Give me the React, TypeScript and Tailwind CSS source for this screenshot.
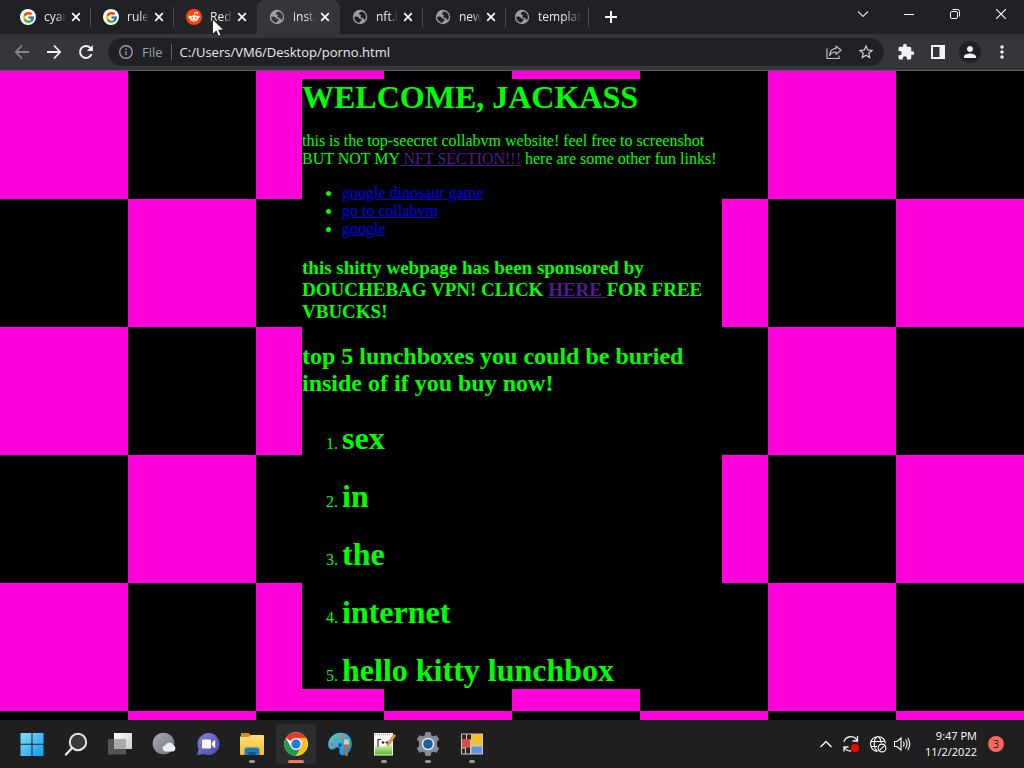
import React from "react";
import { FcGoogle } from "react-icons/fc";
import { MdExtension, MdPerson, MdMoreVert, MdStarOutline } from "react-icons/md";

type TabInfo = { title: string; icon: "google" | "reddit" | "globe"; active?: boolean; hover?: boolean; divider?: boolean };

const tabs: TabInfo[] = [
  { title: "cyan", icon: "google", divider: true },
  { title: "rule3", icon: "google", divider: true },
  { title: "Redd", icon: "reddit", hover: true },
  { title: "insta", icon: "globe", active: true },
  { title: "nft.h", icon: "globe", divider: true },
  { title: "new", icon: "globe", divider: true },
];

function GoogleIcon() {
  return (
    <span className="flex size-4 shrink-0 items-center justify-center rounded-full bg-white">
      <FcGoogle size={13} />
    </span>
  );
}

function RedditIcon() {
  return (
    <svg viewBox="0 0 16 16" className="size-4 shrink-0" aria-hidden="true">
      <circle cx="8" cy="8" r="8" fill="#ff4500" />
      <ellipse cx="8" cy="9.3" rx="4.3" ry="3.1" fill="#fff" />
      <circle cx="3.6" cy="7.8" r="1.2" fill="#fff" />
      <circle cx="12.4" cy="7.8" r="1.2" fill="#fff" />
      <path d="M8 6.4l.7-3 2.3.5" fill="none" stroke="#fff" strokeWidth=".7" />
      <circle cx="11.3" cy="4" r=".9" fill="#fff" />
      <circle cx="6.3" cy="8.6" r=".85" fill="#ff4500" />
      <circle cx="9.7" cy="8.6" r=".85" fill="#ff4500" />
      <path d="M6.2 10.7q1.8 1.1 3.6 0" fill="none" stroke="#ff4500" strokeWidth=".6" />
    </svg>
  );
}

function GlobeIcon({ land }: { land: string }) {
  return (
    <svg viewBox="0 0 16 16" className="size-4 shrink-0" aria-hidden="true">
      <circle cx="8" cy="8" r="7.2" fill="#9aa0a6" />
      <path
        d="M9.400 2.600C8 3 6.800 3.800 7 5c.2 1 1.600.7 1.900 1.500.3.800-.9 1.200-.3 2 .6.700 2.200.1 2.900.9.500.6.100 1.300 1 1.300 1 0 1.400-1.500 1.400-2.700C13.900 5.200 12 3.100 9.400 2.600z"
        className={land}
      />
      <path
        d="M2.200 7.400C2.100 10.800 4.600 13.500 7.600 13.700c.5-.5.300-1.200.9-1.700.6-.500 1.500-.7 1.300-1.500-.3-.9-1.700-.6-2.400-1.100-.7-.5-.8-1.500-1.900-1.700-1-.2-2.200.1-3.300-.3z"
        className={land}
      />
    </svg>
  );
}

function Favicon({ kind, active }: { kind: TabInfo["icon"]; active?: boolean }) {
  if (kind === "google") return <GoogleIcon />;
  if (kind === "reddit") return <RedditIcon />;
  return <GlobeIcon land={active ? "fill-[#35363a]" : "fill-[#202124]"} />;
}

const fade = "overflow-hidden whitespace-nowrap [mask-image:linear-gradient(to_right,black_60%,transparent)]";

function Tab({ tab }: { tab: TabInfo }) {
  const bg = tab.active ? "bg-[#35363a]" : tab.hover ? "bg-[#232428]" : "";
  return (
    <div className={`relative flex w-[83px] items-center rounded-t-lg pl-3 ${bg}`}>
      <button type="button" className="flex items-center gap-2">
        <Favicon kind={tab.icon} active={tab.active} />
        <span className={`w-[22px] text-left ${fade}`}>{tab.title}</span>
      </button>
      <button type="button" aria-label={`Close ${tab.title}`} className="ml-[5px]">
        <svg viewBox="0 0 10 10" className="size-[10px]" aria-hidden="true">
          <path d="M1.2 1.2l7.6 7.6M8.8 1.2L1.2 8.8" stroke="#fff" strokeWidth="1.7" />
        </svg>
      </button>
      {tab.divider && <span className="absolute right-0 h-5 w-px bg-[#4a4c50]" />}
    </div>
  );
}

function TabStrip() {
  return (
    <header className="flex h-[34px] bg-[#202124] pl-2 text-xs text-[#e8eaed]">
      <nav className="flex" aria-label="Tabs">
        {tabs.map((tab, i) => (
          <Tab key={i} tab={tab} />
        ))}
        <button type="button" className="relative flex w-[83px] items-center gap-2 pl-2">
          <Favicon kind="globe" />
          <span className={`w-11 text-left ${fade}`}>template</span>
          <span className="absolute right-0 h-5 w-px bg-[#4a4c50]" />
        </button>
      </nav>
      <button type="button" aria-label="New tab" className="flex w-11 items-center justify-center">
        <svg viewBox="0 0 12 12" className="size-3" aria-hidden="true">
          <path d="M6 0v12M0 6h12" stroke="#fff" strokeWidth="2" />
        </svg>
      </button>
      <div className="ml-auto flex h-7">
        <button type="button" aria-label="Search tabs" className="flex w-[46px] items-center justify-center">
          <svg viewBox="0 0 12 8" className="h-2 w-3" fill="none" stroke="#ddd" strokeWidth="1.1" aria-hidden="true">
            <path d="M1 1.5l5 5 5-5" />
          </svg>
        </button>
        <button type="button" aria-label="Minimize" className="flex w-[46px] items-center justify-center">
          <svg viewBox="0 0 10 10" className="size-[10px]" aria-hidden="true">
            <path d="M0 5.5h10" stroke="#fff" />
          </svg>
        </button>
        <button type="button" aria-label="Restore" className="flex w-[46px] items-center justify-center">
          <svg viewBox="0 0 10 10" className="size-[10px]" fill="none" stroke="#fff" aria-hidden="true">
            <rect x=".5" y="2.5" width="7" height="7" rx="1.3" />
            <path d="M2.5.5h5a2 2 0 0 1 2 2v5" />
          </svg>
        </button>
        <button type="button" aria-label="Close window" className="flex w-[46px] items-center justify-center">
          <svg viewBox="0 0 10 10" className="size-[10px]" aria-hidden="true">
            <path d="M0 0l10 10M10 0L0 10" stroke="#fff" strokeWidth="1.1" />
          </svg>
        </button>
      </div>
    </header>
  );
}

function ToolButton({ label, children }: { label: string; children: React.ReactNode }) {
  return (
    <button type="button" aria-label={label} className="flex h-7 w-8 shrink-0 items-center justify-center text-[#f1f3f4]">
      {children}
    </button>
  );
}

function Toolbar() {
  return (
    <div className="flex h-[37px] items-center border-b border-[#5b5c5f] bg-[#35363a] px-[6px]">
      <ToolButton label="Back">
        <svg viewBox="0 0 16 16" className="size-4" fill="none" stroke="#85878a" strokeWidth="1.8" aria-hidden="true">
          <path d="M15 8H2M8 1.5L1.8 8 8 14.5" />
        </svg>
      </ToolButton>
      <ToolButton label="Forward">
        <svg viewBox="0 0 16 16" className="size-4" fill="none" stroke="currentColor" strokeWidth="1.8" aria-hidden="true">
          <path d="M1 8h13M8 1.5L14.2 8 8 14.5" />
        </svg>
      </ToolButton>
      <ToolButton label="Reload">
        <svg viewBox="0 0 16 16" className="size-4" fill="none" stroke="currentColor" strokeWidth="1.9" aria-hidden="true">
          <path d="M13.6 10.2A6 6 0 1 1 12.4 3.8L14 5.4" />
          <path d="M14.9 1v6H8.9z" fill="currentColor" stroke="none" />
        </svg>
      </ToolButton>
      <form className="mx-[6px] flex h-7 flex-1 items-center rounded-full bg-[#202124] pl-[10px] text-sm" onSubmit={(e) => e.preventDefault()}>
        <svg viewBox="0 0 16 16" className="size-4 shrink-0" fill="none" stroke="#9aa0a6" strokeWidth="1.4" aria-hidden="true">
          <circle cx="8" cy="8" r="6.3" />
          <path d="M8 7.2v4M8 4.4v1.5" />
        </svg>
        <label htmlFor="address" className="ml-2 text-[13px] text-[#9aa0a6]">
          File
        </label>
        <span className="ml-2 h-4 w-px bg-[#5f6368]" />
        <input
          id="address"
          type="text"
          defaultValue="C:/Users/VM6/Desktop/porno.html"
          className="ml-2 min-w-0 flex-1 bg-transparent text-[13px] text-[#e8eaed] outline-none"
        />
        <ToolButton label="Share">
          <svg viewBox="0 0 16 16" className="size-4" fill="none" stroke="#bdc1c6" strokeWidth="1.2" aria-hidden="true">
            <path d="M1 4.5v10h12v-3" />
            <path d="M10 2l5 4.2-5 4.2V8C7 8 5 9 3.6 11.4 4 7.4 6.4 4.7 10 4.4z" strokeLinejoin="round" />
          </svg>
        </ToolButton>
        <ToolButton label="Bookmark">
          <MdStarOutline size={18} className="text-[#d0d3d6]" />
        </ToolButton>
        <span className="w-[2px]" />
      </form>
      <ToolButton label="Extensions">
        <MdExtension size={18} />
      </ToolButton>
      <ToolButton label="Side panel">
        <svg viewBox="0 0 14 14" className="size-[14px]" aria-hidden="true">
          <path d="M0 0h14v14H0zM2 2v10h6.500V2z" fill="currentColor" fillRule="evenodd" />
        </svg>
      </ToolButton>
      <ToolButton label="Profile">
        <span className="flex size-[22px] items-center justify-center rounded-full bg-[#202124]">
          <MdPerson size={18} />
        </span>
      </ToolButton>
      <ToolButton label="Menu">
        <MdMoreVert size={20} />
      </ToolButton>
    </div>
  );
}

function PageLink({ visited, children }: { visited?: boolean; children: React.ReactNode }) {
  return (
    <a href="#" className={`underline ${visited ? "text-[#551a8b]" : "text-[#0000ee]"}`}>
      {children}
    </a>
  );
}

function WebPage() {
  return (
    <main className="flex-1 overflow-hidden bg-[conic-gradient(#000_25%,#ff00dc_0_50%,#000_0_75%,#ff00dc_0)] bg-[length:256px_256px] pt-2 font-['Liberation_Serif',serif] text-base leading-[18px] text-[#00ff00]">
      <article className="mx-auto max-w-[420px] bg-black">
        <h1 className="text-[32px] leading-[37px] font-bold">WELCOME, JACKASS</h1>
        <p className="mt-4">
          this is the top-seecret collabvm website! feel free to screenshot BUT NOT MY
          <PageLink visited> NFT SECTION!!!</PageLink> here are some other fun links!
        </p>
        <ul className="mt-4 list-disc pl-10">
          <li><PageLink>google dinosaur game</PageLink></li>
          <li><PageLink>go to collabvm</PageLink></li>
          <li><PageLink>google</PageLink></li>
        </ul>
        <h3 className="mt-[19px] text-[19px] leading-[22px] font-bold">
          this shitty webpage has been sponsored by DOUCHEBAG VPN! CLICK <PageLink visited>HERE </PageLink>FOR FREE VBUCKS!
        </h3>
        <h2 className="mt-5 text-2xl leading-[27px] font-bold">
          top 5 lunchboxes you could be buried inside of if you buy now!
        </h2>
        <ol className="mt-[23px] flex list-decimal flex-col gap-[21px] pl-10">
          {["sex", "in", "the", "internet", "hello kitty lunchbox"].map((item) => (
            <li key={item}>
              <h1 className="text-[32px] leading-[37px] font-bold">{item}</h1>
            </li>
          ))}
        </ol>
      </article>
    </main>
  );
}

function TaskIcon({ label, running, active, children }: { label: string; running?: boolean; active?: boolean; children: React.ReactNode }) {
  return (
    <button
      type="button"
      aria-label={label}
      className={`relative mx-[2px] flex h-10 w-10 items-center justify-center rounded ${active ? "bg-[#2d2d2d]" : ""}`}
    >
      <svg viewBox="0 0 24 24" className="size-6" aria-hidden="true">
        {children}
      </svg>
      {running && (
        <span className={`absolute bottom-px h-[3px] rounded-full ${active ? "w-4 bg-[#f0776c]" : "w-[6px] bg-[#9a9a9a]"}`} />
      )}
    </button>
  );
}

function Taskbar() {
  return (
    <footer className="flex h-12 items-center bg-[#1f1f1f] pr-5 pl-[10px] text-xs text-white">
      <svg className="absolute size-0" aria-hidden="true">
        <defs>
          <linearGradient id="win" x1="0" y1="0" x2="1" y2="1"><stop stopColor="#83dcfb" /><stop offset="1" stopColor="#0fa0ee" /></linearGradient>
          <linearGradient id="chat" x1="0" y1="0" x2="1" y2="1"><stop stopColor="#8a83dc" /><stop offset="1" stopColor="#4547ae" /></linearGradient>
          <linearGradient id="moon" x1="0" y1="0" x2="1" y2="1"><stop stopColor="#a9adb6" /><stop offset="1" stopColor="#6d727b" /></linearGradient>
          <linearGradient id="folder" x1="0" y1="0" x2="0" y2="1"><stop stopColor="#ffe07a" /><stop offset="1" stopColor="#f7b92c" /></linearGradient>
          <linearGradient id="paint" x1="0" y1="0" x2="1" y2="1"><stop stopColor="#58d2ee" /><stop offset="1" stopColor="#1580cd" /></linearGradient>
          <linearGradient id="view" x1="0" y1="0" x2="1" y2="1"><stop stopColor="#fff" /><stop offset="1" stopColor="#ccc" /></linearGradient>
          <linearGradient id="note" x1="0" y1="0" x2="0" y2="1"><stop stopColor="#e4f6b8" /><stop offset="1" stopColor="#55bd24" /></linearGradient>
        </defs>
      </svg>
      <TaskIcon label="Start">
        <path d="M.5 1H11.500V11.700H.5zM12.500 1H23.500V11.700H12.500zM.5 12.700H11.500V24H.5zM12.500 12.700H23.500V24H12.500z" fill="url(#win)" />
      </TaskIcon>
      <TaskIcon label="Search">
        <path d="M8.500 15.500L2 22.500" stroke="#e5e5e5" strokeWidth="2.400" strokeLinecap="round" />
        <circle cx="14" cy="10" r="8.200" fill="#3a3a3a" stroke="#e5e5e5" strokeWidth="2" />
      </TaskIcon>
      <TaskIcon label="Task view">
        <path d="M6 1H24V17H6z" fill="url(#view)" />
        <path d="M0 7H18V22.500H0z" fill="#555" />
        <path d="M6 7H18V17H6z" fill="#aaa" />
      </TaskIcon>
      <TaskIcon label="Weather">
        <circle cx="11.500" cy="11.500" r="10.800" fill="url(#moon)" />
        <path d="M13.500 19.500a3.200 3.200 0 0 1-.3-6.300 4.400 4.400 0 0 1 8-.2 3.400 3.400 0 0 1-.4 6.500z" fill="#e9edf5" />
      </TaskIcon>
      <TaskIcon label="Chat">
        <path d="M12.500 1a11 11 0 1 1-4.800 20.900L1.200 23.200 2.700 17A11 11 0 0 1 12.500 1z" fill="url(#chat)" />
        <rect x="6" y="7.500" width="9" height="9" rx="1.300" fill="#fff" />
        <path d="M16 10.600l3.200-2.800v8.400L16 13.400z" fill="#fff" />
      </TaskIcon>
      <TaskIcon label="File Explorer" running>
        <path d="M1 1h8l2.500 3.500H1z" fill="#d8920c" />
        <path d="M0 4.500h9l2.500-1.500H23a1 1 0 0 1 1 1V22a1 1 0 0 1-1 1H1a1 1 0 0 1-1-1z" fill="url(#folder)" />
        <path d="M4.500 23v-5a2.500 2.500 0 0 1 2.500-2.500h10a2.500 2.500 0 0 1 2.500 2.500v5z" fill="#147cc0" />
        <path d="M8.500 20h7v3h-7z" fill="#0b5791" />
      </TaskIcon>
      <TaskIcon label="Google Chrome" running active>
        <circle cx="12" cy="12" r="11.800" fill="#fff" />
        <path d="M12 12L1.780 6.100A11.800 11.800 0 0 1 22.220 6.100H12z" fill="#e33b2e" />
        <path d="M22.220 6.100A11.800 11.800 0 0 1 12 23.800L17.110 14.950 12 6.100z" fill="#fbc116" />
        <path d="M1.780 6.100A11.800 11.800 0 0 0 12 23.800L17.110 14.950 12 12 6.890 14.950z" fill="#249c48" />
        <circle cx="12" cy="12" r="5.900" fill="#fff" />
        <circle cx="12" cy="12" r="4.700" fill="#2d76e8" />
      </TaskIcon>
      <TaskIcon label="Paint">
        <path d="M12.500.8C20 .8 23.800 5.500 23.800 12c0 5.500-3.300 10.800-8.300 11.200-3.500.2-4.700-2-4-5 .4-2-.2-3.200-2-3-2 .2-3 2.300-5.500 2.300C1.500 17.500.2 15.500.2 13 .2 6.500 5.500.8 12.500.8z" fill="url(#paint)" />
        <circle cx="7.500" cy="7" r="2" fill="#65b84c" />
        <circle cx="13.500" cy="4.500" r="2" fill="#ed7a33" />
        <circle cx="4" cy="12" r="1.700" fill="#ed5a43" />
        <circle cx="12" cy="13" r="1.700" fill="#17436e" />
        <path d="M16 8h5v6l-1.200 1.500v7.500a1.200 1.200 0 0 1-2.500 0v-7.500L16 14z" fill="#b5703c" />
        <path d="M16 7.500h5v5h-5z" fill="#e3c7a0" />
      </TaskIcon>
      <TaskIcon label="Notepad++" running>
        <path d="M2 1H21V23.500H2z" fill="#f8f8f4" />
        <path d="M3 14c6 2 12 0 17-2v10.500H3z" fill="url(#note)" />
        <path d="M3 2.500h16" stroke="#aaa" strokeWidth="1.500" strokeDasharray="1 1" />
        <path d="M6 7v8M6 7.500h3M9.500 10.500h3M11 9v3M13.500 10.500h3M15 9v3" stroke="#333" strokeWidth="1.200" fill="none" />
        <path d="M15 14l1-4 6-8 2 1.500-6 8.500z" fill="#e4a137" stroke="#9c692a" strokeWidth=".5" />
      </TaskIcon>
      <TaskIcon label="Settings" running>
        <path d="M9.500 0h5l.8 3.300 2 .9 3.200-1 2.700 4.100L21 10v4l2.200 2.600-2.700 4.200-3.200-1-2 1-.8 3.200h-5l-.8-3.200-2-1-3.200 1-2.700-4.200L3 14v-4L.8 7.300l2.700-4.100 3.200 1 2-.9z" fill="#858b92" />
        <circle cx="12" cy="12" r="6.200" fill="#e7edf2" />
        <circle cx="12" cy="12" r="4.800" fill="#155fa6" />
      </TaskIcon>
      <TaskIcon label="System tool" running>
        <path d="M1 1.500H23V22.500H1z" fill="#cfc8bd" />
        <path d="M2 2.500h4v5H2zM7 2.500h4v5H7z" fill="#352424" />
        <path d="M2 7h8v8.500H2z" fill="#dc4a46" />
        <path d="M2 16.500h3v5H2zM6 15.500h4v6H6z" fill="#292929" />
        <path d="M11.500 2.500H22V13H11.500z" fill="#f6bf24" />
        <path d="M11.500 14.500H22v7H11.500z" fill="#5b94e6" />
      </TaskIcon>
      <div className="ml-auto flex items-center">
        <button type="button" aria-label="Show hidden icons" className="flex w-6 justify-center">
          <svg viewBox="0 0 12 8" className="h-2 w-3" fill="none" stroke="#fff" strokeWidth="1.300" aria-hidden="true"><path d="M.5 7L6 1.500 11.500 7" /></svg>
        </button>
        <button type="button" aria-label="Updates" className="flex w-[26px] justify-center">
          <svg viewBox="0 0 18 18" className="size-[18px]" fill="none" stroke="#eee" strokeWidth="1.300" aria-hidden="true">
            <path d="M2 7A7 7 0 0 1 15 5.500M15.500 1v5h-5M2 16.500v-4.500h4.500M2.500 12.500A7 7 0 0 0 9 16" />
            <circle cx="13" cy="13" r="4" fill="#f00" stroke="none" />
          </svg>
        </button>
        <button type="button" aria-label="Network" className="flex w-7 justify-center">
          <svg viewBox="0 0 18 18" className="size-[18px]" fill="none" stroke="#fff" strokeWidth="1.100" aria-hidden="true">
            <path d="M8.500 16.500A7.500 7.500 0 1 1 16.500 8.500M8.500 16.500C3.500 12 4.500 3 9 1.500c2 1.200 3 4 3.200 6.500M2 6.500h14M2 11.500h6" />
            <circle cx="13" cy="13" r="3.900" />
            <path d="M10.300 15.700l5.400-5.400" />
          </svg>
        </button>
        <button type="button" aria-label="Volume" className="flex w-5 justify-center">
          <svg viewBox="0 0 18 16" className="h-4 w-[18px]" fill="none" stroke="#fff" strokeWidth="1.100" aria-hidden="true">
            <path d="M1.500 5.500h2.500L8 2v12l-4-3.500H1.500zM10.300 5.500q1.700 2.500 0 5M12.500 3.500q3 4.500 0 9M14.700 2q4 6 0 12" />
          </svg>
        </button>
        <div className="w-[65px] text-right text-[11px] leading-4">
          <div>9:47 PM</div>
          <div>11/2/2022</div>
        </div>
        <button type="button" aria-label="3 notifications" className="ml-[11px] flex size-4 items-center justify-center rounded-full bg-[#f4695f] text-[11px] leading-4 text-[#2b1513]">
          3
        </button>
      </div>
    </footer>
  );
}

export default function App() {
  return (
    <div className="relative flex h-screen flex-col overflow-hidden font-['Open_Sans','Noto_Sans',sans-serif]">
      <TabStrip />
      <Toolbar />
      <WebPage />
      <Taskbar />
      <svg viewBox="0 0 12 19" className="pointer-events-none absolute top-[18px] left-[212px] h-[19px] w-3" aria-hidden="true">
        <path d="M.5 1v15.500l3.700-3.500 2.300 5.300 2.500-1.100-2.300-5.100h5z" fill="#fff" stroke="#111" strokeWidth=".8" />
      </svg>
    </div>
  );
}
